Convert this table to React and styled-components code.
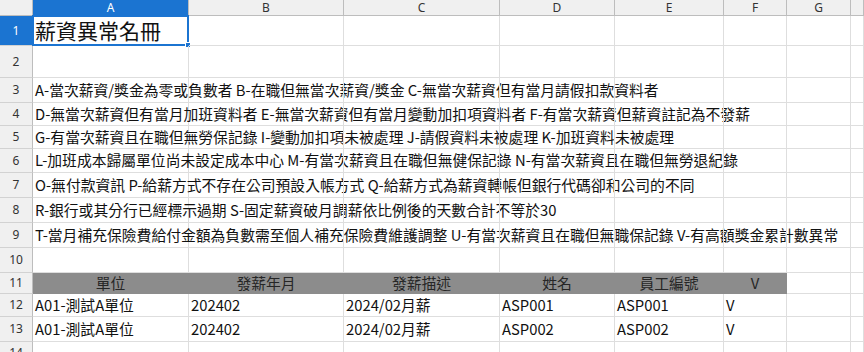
import React from "react";
import styled, { createGlobalStyle } from "styled-components";

const Global = createGlobalStyle`
  html, body { margin: 0; padding: 0; background: #ffffff; }
  body { overflow: hidden; }
  * { box-sizing: border-box; }
`;

const COLS = ["A", "B", "C", "D", "E", "F", "G", ""];
const ROW_HEIGHTS = [30, 32, 25, 23, 23, 24, 25, 25, 25, 25, 21, 23, 25, 23];

const Sheet = styled.div`
  display: grid;
  grid-template-columns: 33px 156px 155px 156px 115px 109px 63px 64px 1fr;
  grid-template-rows: 16px ${ROW_HEIGHTS.map((h) => h + "px").join(" ")};
  width: 864px;
  height: 352px;
  overflow: hidden;
  background: #ffffff;
  font-family: "Noto Sans CJK TC", "Noto Sans", sans-serif;
  color: #111111;
`;

const Corner = styled.div`
  background: #f0f0f0;
  border-right: 1px solid #bdbdbd;
  border-bottom: 1px solid #bdbdbd;
`;

const ColHeader = styled.div`
  display: flex;
  align-items: center;
  justify-content: center;
  background: ${(p) => (p.$active ? "#1b74d1" : "#f0f0f0")};
  color: ${(p) => (p.$active ? "#ffffff" : "#333333")};
  border-right: 1px solid #bdbdbd;
  border-bottom: 1px solid ${(p) => (p.$active ? "#1b74d1" : "#bdbdbd")};
  font-family: "Noto Sans", sans-serif;
  font-size: 12px;
  line-height: 1;
`;

const RowHeader = styled.div`
  display: flex;
  align-items: center;
  justify-content: center;
  background: ${(p) => (p.$active ? "#1b74d1" : "#f0f0f0")};
  color: ${(p) => (p.$active ? "#ffffff" : "#333333")};
  border-right: 1px solid #bdbdbd;
  border-bottom: 1px solid #d2d2d2;
  font-family: "Noto Sans", sans-serif;
  font-size: 12px;
  line-height: 1;
`;

const Cell = styled.div`
  position: relative;
  display: flex;
  align-items: center;
  justify-content: ${(p) => (p.$center ? "center" : "flex-start")};
  padding: 0 2px;
  white-space: nowrap;
  overflow: visible;
  background: ${(p) => (p.$head ? "#8c8c8c" : "transparent")};
  border-right: 1px solid ${(p) => (p.$head ? "#8c8c8c" : "#dedede")};
  border-bottom: 1px solid ${(p) => (p.$head ? "#8c8c8c" : "#dedede")};
  font-size: ${(p) => (p.$title ? "21px" : "14.8px")};
  line-height: 1;
  color: ${(p) => (p.$head ? "#262626" : "#111111")};
`;

const Selection = styled.div`
  position: absolute;
  left: -1px;
  top: -1px;
  right: -1px;
  bottom: -1px;
  border: 2px solid #1b74d1;
  pointer-events: none;
`;

const Handle = styled.span`
  position: absolute;
  right: -4px;
  bottom: -4px;
  width: 6px;
  height: 6px;
  background: #1b74d1;
  border: 1px solid #ffffff;
`;

const notes = [
  "A-當次薪資/獎金為零或負數者 B-在職但無當次薪資/獎金 C-無當次薪資但有當月請假扣款資料者",
  "D-無當次薪資但有當月加班資料者 E-無當次薪資但有當月變動加扣項資料者 F-有當次薪資但薪資註記為不發薪",
  "G-有當次薪資且在職但無勞保記錄 I-變動加扣項未被處理 J-請假資料未被處理 K-加班資料未被處理",
  "L-加班成本歸屬單位尚未設定成本中心 M-有當次薪資且在職但無健保記錄 N-有當次薪資且在職但無勞退紀錄",
  "O-無付款資訊 P-給薪方式不存在公司預設入帳方式 Q-給薪方式為薪資轉帳但銀行代碼卻和公司的不同",
  "R-銀行或其分行已經標示過期 S-固定薪資破月調薪依比例後的天數合計不等於30",
  "T-當月補充保險費給付金額為負數需至個人補充保險費維護調整 U-有當次薪資且在職但無職保記錄 V-有高額獎金累計數異常",
];

const headers = ["單位", "發薪年月", "發薪描述", "姓名", "員工編號", "V"];
const records = [
  ["A01-測試A單位", "202402", "2024/02月薪", "ASP001", "ASP001", "V"],
  ["A01-測試A單位", "202402", "2024/02月薪", "ASP002", "ASP002", "V"],
];

function buildRows() {
  const rows = [];
  rows.push({ kind: "title", cells: ["薪資異常名冊"] });
  rows.push({ kind: "plain", cells: [] });
  notes.forEach((n) => rows.push({ kind: "plain", cells: [n] }));
  rows.push({ kind: "plain", cells: [] });
  rows.push({ kind: "head", cells: headers });
  records.forEach((r) => rows.push({ kind: "plain", cells: r }));
  rows.push({ kind: "plain", cells: [] });
  return rows;
}

export default function App() {
  const rows = buildRows();
  return (
    <>
      <Global />
      <Sheet>
        <Corner />
        {COLS.map((c, i) => (
          <ColHeader key={"h" + i} $active={c === "A"}>
            {c}
          </ColHeader>
        ))}
        {rows.map((row, r) => (
          <React.Fragment key={"r" + r}>
            <RowHeader $active={r === 0}>{r + 1}</RowHeader>
            {COLS.map((c, ci) => {
              const text = row.cells[ci] || "";
              const isHead = row.kind === "head" && ci < headers.length;
              return (
                <Cell
                  key={"c" + r + "-" + ci}
                  $head={isHead}
                  $center={isHead}
                  $title={row.kind === "title"}
                >
                  {text}
                  {r === 0 && ci === 0 && (
                    <Selection>
                      <Handle />
                    </Selection>
                  )}
                </Cell>
              );
            })}
          </React.Fragment>
        ))}
      </Sheet>
    </>
  );
}
